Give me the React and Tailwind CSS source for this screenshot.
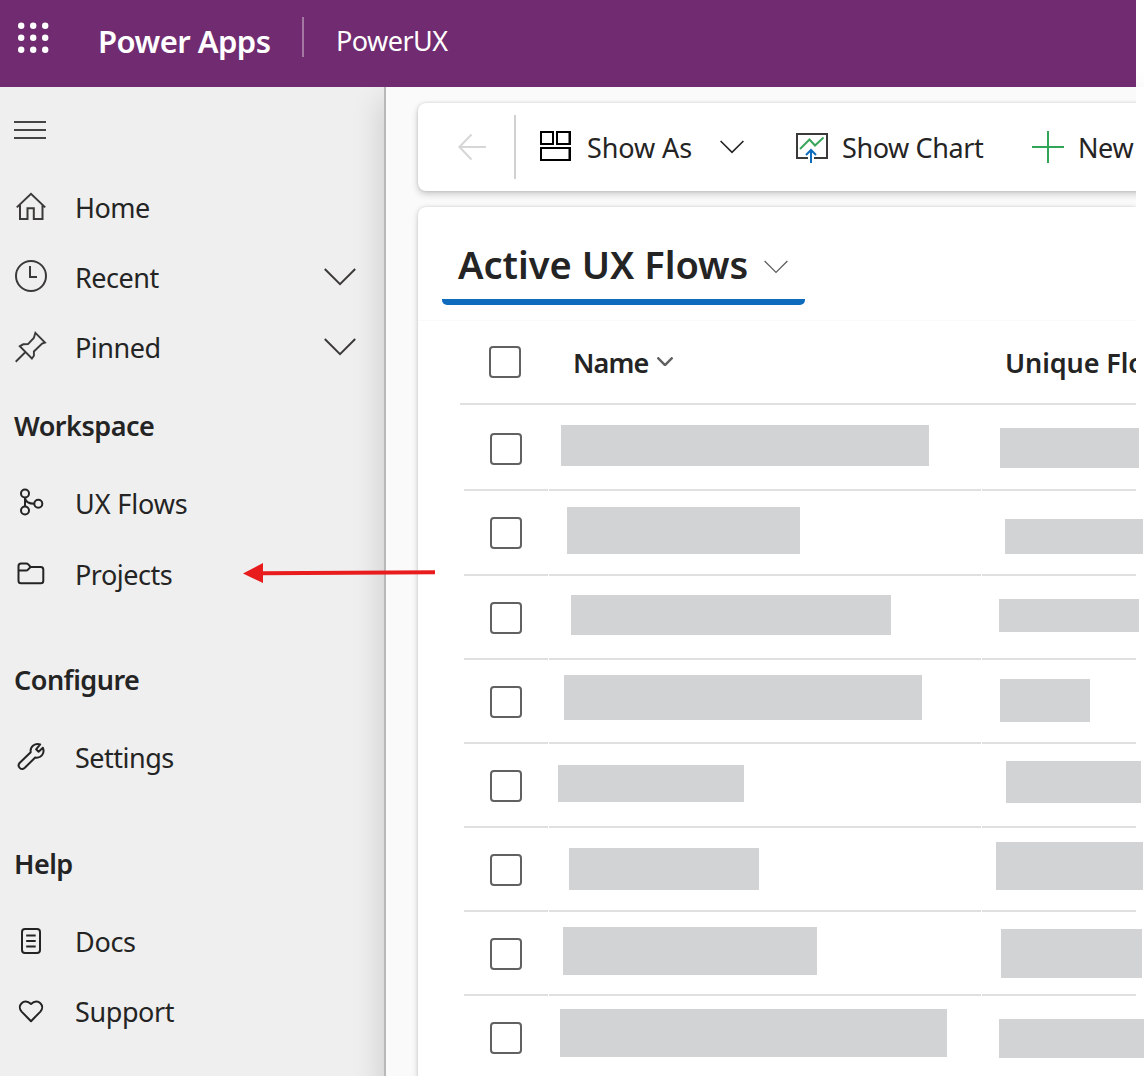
const ink = "#242424";

function WaffleIcon() {
  const dots = [3.2, 15.2, 27.2];
  return (
    <svg viewBox="0 0 31 31" fill="white" className="block size-[31px]">
      {dots.map((y) => dots.map((x) => <circle key={`${x}-${y}`} cx={x} cy={y + 0.5} r="3.2" />))}
    </svg>
  );
}

function Icon({ children, stroke = "#3b3a39", width = 2 }) {
  return (
    <svg viewBox="0 0 32 32" fill="none" stroke={stroke} strokeWidth={width} className="size-8 shrink-0 overflow-visible">
      {children}
    </svg>
  );
}

const icons = {
  home: (
    <Icon>
      <path d="M1.800 15.400 16 1.800 30.200 15.400M5 13V27H12.500V16.200H18.800V27H27.500V13" />
    </Icon>
  ),
  recent: (
    <Icon>
      <circle cx="16" cy="14" r="15" />
      <path d="M15 4V15h7" />
    </Icon>
  ),
  pinned: (
    <Icon width={1.9}>
      <path d="M.7 29.700 11 19.500M20.400.8 30 10.500l-2.900 1-8.200 8 0 4.300-2 2.700L4.800 14.200l3.400-1.900 4.800-.2L18.800 6z" />
    </Icon>
  ),
  flows: (
    <Icon stroke={ink}>
      <circle cx="10" cy="5.500" r="4" />
      <circle cx="10" cy="22.500" r="4" />
      <circle cx="23.300" cy="15.700" r="4" />
      <path d="M10 9.500v9M10 10c.6 3.700 3.600 5.700 9.300 5.700" />
    </Icon>
  ),
  projects: (
    <Icon stroke={ink}>
      <path d="M3.500 7a2.500 2.500 0 0 1 2.500-2.500h5.300c.9 0 1.400.3 2 .9l2.300 2.600H25.800a2.500 2.500 0 0 1 2.500 2.500V21.700a2.500 2.500 0 0 1-2.500 2.500H6a2.500 2.500 0 0 1-2.500-2.500zM3.500 11.500H11c.8 0 1.500-.3 2-.9l2.600-2.600" />
    </Icon>
  ),
  settings: (
    <Icon stroke={ink}>
      <path
        strokeLinejoin="round"
        d="M25.200 2.400c-5-1.600-10.400 1.800-9.500 7.800L4.800 20.800c-3.300 3.500 1.400 8.300 5 5L20.200 15.500c6.200 1 9.800-4.500 7.700-9.700L23.600 9.800l-2.500-2.500z"
      />
    </Icon>
  ),
  docs: (
    <Icon stroke={ink}>
      <rect x="7" y="3" width="18" height="24" rx="3" />
      <path d="M11.200 9.500h9.500M11.200 15h9.500M11.200 20.500h9.500" />
    </Icon>
  ),
  support: (
    <Icon stroke={ink}>
      <path d="M16 25.200 6.600 15.600C1.400 9.700 8.800 1.500 16 8c7.200-6.500 14.600 1.700 9.400 7.600z" strokeLinejoin="round" />
    </Icon>
  ),
};

function Chevron({ className, color, width }) {
  return (
    <svg viewBox="0 0 32 18" fill="none" stroke={color} strokeWidth={width} className={`shrink-0 ${className}`}>
      <path d="M.8 1 16 16.200 31.200 1" />
    </svg>
  );
}

function NavItem({ icon, label, expandable, className = "h-[70px]", tracking = "tracking-[-0.5px]" }) {
  return (
    <div className={`flex items-center pl-[15px] pr-7 text-[27px] ${className}`}>
      {icons[icon]}
      <span className={`ml-[28px] flex-1 ${tracking}`}>{label}</span>
      {expandable && <Chevron className="mb-[2px] h-[18px] w-8" color="#3b3a39" width={2} />}
    </div>
  );
}

function NavHeading({ children }) {
  return (
    <h2 className="flex h-[86px] items-center pl-[14px] text-[27px] font-semibold tracking-[-0.5px]">{children}</h2>
  );
}

function Checkbox({ className = "" }) {
  return <div className={`size-8 shrink-0 rounded-[4px] border-2 border-[#616161] bg-white ${className}`} />;
}

const rows = [
  ["h-[86px]", "mt-[28px]", "ml-[11px] mt-[20px] w-[368px] h-[41px]", "ml-[17px] mt-[23px] w-[139px] h-[40px]"],
  ["h-[85px]", "mt-[26px]", "ml-[17px] mt-[16px] w-[233px] h-[47px]", "ml-[22px] mt-[28px] w-[138px] h-[35px]"],
  ["h-[84px]", "mt-[26px]", "ml-[21px] mt-[19px] w-[320px] h-[40px]", "ml-[16px] mt-[23px] w-[140px] h-[33px]"],
  ["h-[84px]", "mt-[26px]", "ml-[14px] mt-[15px] w-[358px] h-[45px]", "ml-[17px] mt-[19px] w-[90px] h-[43px]"],
  ["h-[84px]", "mt-[26px]", "ml-[8px] mt-[21px] w-[186px] h-[37px]", "ml-[23px] mt-[17px] w-[135px] h-[42px]"],
  ["h-[84px]", "mt-[26px]", "ml-[19px] mt-[20px] w-[190px] h-[42px]", "ml-[13px] mt-[14px] w-[147px] h-[48px]"],
  ["h-[84px]", "mt-[26px]", "ml-[13px] mt-[15px] w-[254px] h-[48px]", "ml-[18px] mt-[17px] w-[141px] h-[49px]"],
  ["h-[84px]", "mt-[26px]", "ml-[10px] mt-[13px] w-[387px] h-[48px]", "ml-[16px] mt-[23px] w-[145px] h-[39px]"],
];

function Row({ row }) {
  const [height, check, name, unique] = row;
  return (
    <div className={`ml-[46px] flex w-[672px] ${height}`}>
      <div className="mr-[1px] w-[84px] shrink-0 border-b-2 border-[#e0e0e0] pl-[26px]">
        <Checkbox className={check} />
      </div>
      <div className="mr-[1px] w-[432px] shrink-0 border-b-2 border-[#e0e0e0] pl-[1px]">
        <div className={`bg-[#d2d3d5] ${name}`} />
      </div>
      <div className="w-[154px] shrink-0 border-b-2 border-[#e0e0e0] pl-[1px]">
        <div className={`relative z-10 bg-[#d2d3d5] ${unique}`} />
      </div>
    </div>
  );
}

export default function App() {
  return (
    <div className="relative flex h-[1076px] w-[1144px] flex-col overflow-hidden bg-white font-['Noto_Sans',sans-serif] text-[#242424]">
      <header className="relative z-20 flex h-[87px] w-[1136px] shrink-0 bg-[#712b70] text-white">
        <div className="pl-[18px] pt-[22px]">
          <WaffleIcon />
        </div>
        <div className="ml-[49px] flex h-[82px] w-[204px] items-center whitespace-nowrap text-[31px] font-semibold tracking-[-0.55px]">
          Power Apps
        </div>
        <div className="mt-[17px] h-10 w-[2px] bg-[#a578a4]" />
        <div className="ml-[32px] flex h-[83px] items-center text-[27px] tracking-[-0.55px]">PowerUX</div>
      </header>

      <div className="flex flex-1">
        <nav className="w-[384px] shrink-0 bg-[#efefef]">
          <div className="flex h-[86px] flex-col justify-center gap-[6px] pl-[14px]">
            <div className="h-[2px] w-8 bg-[#444]" />
            <div className="h-[2px] w-8 bg-[#444]" />
            <div className="h-[2px] w-8 bg-[#444]" />
          </div>
          <NavItem icon="home" label="Home" tracking="tracking-[-0.5px]" />
          <NavItem icon="recent" label="Recent" expandable />
          <NavItem icon="pinned" label="Pinned" expandable />
          <NavHeading>Workspace</NavHeading>
          <NavItem icon="flows" label="UX Flows" tracking="tracking-[-0.1px]" />
          <NavItem icon="projects" label="Projects" className="mb-[26px] h-[72px]" />
          <NavHeading>Configure</NavHeading>
          <NavItem icon="settings" label="Settings" className="mb-[28px] h-[70px]" />
          <NavHeading>Help</NavHeading>
          <NavItem icon="docs" label="Docs" tracking="tracking-[-0.3px]" />
          <NavItem icon="support" label="Support" tracking="tracking-[-0.4px]" />
        </nav>

        <main className="relative w-[760px] shrink-0 border-l-2 border-[#b8b8b8] bg-[#fafafa] pl-8 pt-4 shadow-[0_13px_30px_rgba(0,0,0,0.17)]">
          <div className="flex h-[88px] w-[740px] items-center whitespace-nowrap rounded-lg bg-white text-[27px] shadow-[0_3px_7px_rgba(0,0,0,0.2),0_0_3px_rgba(0,0,0,0.14)]">
            <svg viewBox="0 0 30 28" fill="none" stroke="#d6d6d6" strokeWidth="2" className="ml-[39px] h-7 w-[30px] shrink-0">
              <path d="M29 14H2M14.500 1.500 2.400 14 14.500 26.500" />
            </svg>
            <div className="ml-[27px] h-16 w-[2px] shrink-0 bg-[#d1d1d1]" />
            <svg viewBox="0 0 32 30" fill="none" stroke="#000" strokeWidth="2" className="mb-0.5 ml-6 h-[30px] w-8 shrink-0">
              <path d="M1 1h12v12H1zM17 1h12.500v12H17zM1 17h28.500v12H1zM30 0v14M30 16v14" />
            </svg>
            <span className="ml-[15px] mt-[2px] w-[133px] tracking-[-0.1px]">Show As</span>
            <Chevron className="mb-[1px] h-[14px] w-[24px]" color="#242424" width={2.2} />
            <svg viewBox="0 0 32 30" fill="none" strokeWidth="2" className="ml-[52px] mt-[2px] h-[30px] w-8 shrink-0">
              <path d="M12 25H1V1h30v24H18" stroke="#3b3a39" />
              <path d="m4 16 9.500-9.500L19 12.500l8.500-8" stroke="#3aa65b" />
              <path d="M15 30V17.500M10 22l5-5 5 5" stroke="#0f6cbd" />
            </svg>
            <span className="ml-[14px] mt-[2px] w-[190px] tracking-[-0.4px]">Show Chart</span>
            <svg viewBox="0 0 32 32" stroke="#30a457" strokeWidth="2" className="size-8 shrink-0">
              <path d="M16 0v32M0 16h32" />
            </svg>
            <span className="ml-[14px] mt-[2px] tracking-[-0.4px]">New</span>
          </div>

          <section className="mt-4 h-[880px] w-[718px] rounded-tl-lg bg-white shadow-[0_2px_7px_rgba(0,0,0,0.16),0_0_3px_rgba(0,0,0,0.12)]">
            <div className="h-[114px] border-b border-[#fafafa] pl-6 pt-[24px]">
              <div className="flex h-[74px] w-[363px] items-center whitespace-nowrap rounded-[5px] border-b-[6px] border-[#0f6cbd] pl-4">
                <h1 className="mb-[2px] w-[306px] text-[38px] font-semibold">Active UX Flows</h1>
                <Chevron className="mt-1 h-[14px] w-[24px]" color="#616161" width={1.8} />
              </div>
            </div>
            <div className="ml-[42px] flex h-[84px] w-[676px] overflow-hidden whitespace-nowrap border-b-2 border-[#e0e0e0] text-[27px] font-semibold">
              <Checkbox className="ml-[29px] mt-[25px]" />
              <div className="ml-[52px] flex h-[84px] w-[432px] shrink-0 items-center">
                <span className="w-[84px] tracking-[-0.9px]">Name</span>
                <Chevron className="mb-[3px] h-[9px] w-4" color="#616161" width={5} />
              </div>
              <div className="flex h-[84px] shrink-0 items-center tracking-[-0.1px]">Unique Flow</div>
            </div>
            {rows.map((row, i) => (
              <Row key={i} row={row} />
            ))}
          </section>
          <div className="absolute inset-y-0 right-0 w-2 bg-white" />
        </main>
      </div>

      <svg viewBox="0 0 192 20" className="absolute left-[243px] top-[563px] z-30 h-5 w-48">
        <path d="M0 10.500 20 0v20z" fill="#e81c1c" />
        <path d="M19 10.300 192 9.200" stroke="#e81c1c" strokeWidth="4" />
      </svg>
    </div>
  );
}
